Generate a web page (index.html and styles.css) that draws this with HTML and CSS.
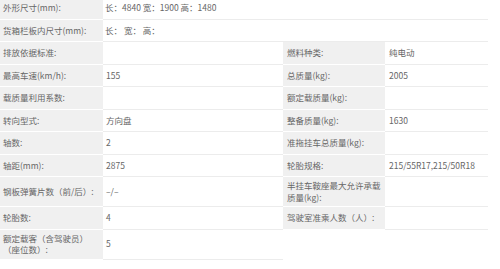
FILE: index.html
```html
<!DOCTYPE html>
<html lang="zh-CN">
<head>
<meta charset="utf-8">
<title>参数</title>
<link rel="stylesheet" href="styles.css">
</head>
<body>
<table class="spec">
  <colgroup>
    <col class="c-label">
    <col class="c-value">
    <col class="c-label2">
    <col class="c-value2">
  </colgroup>
  <tbody>
    <tr>
      <td class="lbl">外形尺寸(mm):</td>
      <td class="val wide" colspan="3">长：4840 宽：1900 高：1480</td>
    </tr>
    <tr>
      <td class="lbl">货箱栏板内尺寸(mm):</td>
      <td class="val wide" colspan="3">长： 宽： 高：</td>
    </tr>
    <tr>
      <td class="lbl">排放依据标准:</td>
      <td class="val"></td>
      <td class="lbl">燃料种类:</td>
      <td class="val">纯电动</td>
    </tr>
    <tr>
      <td class="lbl">最高车速(km/h):</td>
      <td class="val">155</td>
      <td class="lbl">总质量(kg):</td>
      <td class="val">2005</td>
    </tr>
    <tr>
      <td class="lbl">载质量利用系数:</td>
      <td class="val"></td>
      <td class="lbl">额定载质量(kg):</td>
      <td class="val"></td>
    </tr>
    <tr>
      <td class="lbl">转向型式:</td>
      <td class="val">方向盘</td>
      <td class="lbl">整备质量(kg):</td>
      <td class="val">1630</td>
    </tr>
    <tr>
      <td class="lbl">轴数:</td>
      <td class="val">2</td>
      <td class="lbl">准拖挂车总质量(kg):</td>
      <td class="val"></td>
    </tr>
    <tr>
      <td class="lbl">轴距(mm):</td>
      <td class="val">2875</td>
      <td class="lbl">轮胎规格:</td>
      <td class="val">215/55R17,215/50R18</td>
    </tr>
    <tr>
      <td class="lbl">钢板弹簧片数（前/后）:</td>
      <td class="val">–/–</td>
      <td class="lbl">半挂车鞍座最大允许承载质量(kg):</td>
      <td class="val"></td>
    </tr>
    <tr>
      <td class="lbl">轮胎数:</td>
      <td class="val">4</td>
      <td class="lbl">驾驶室准乘人数（人）:</td>
      <td class="val"></td>
    </tr>
    <tr class="last">
      <td class="lbl">额定载客（含驾驶员）<br>（座位数）:</td>
      <td class="val">5</td>
      <td class="none"></td>
      <td class="none"></td>
    </tr>
  </tbody>
</table>
</body>
</html>
```

FILE: styles.css
```css
html, body {
  margin: 0;
  padding: 0;
  background: #ffffff;
}

.spec {
  width: 488px;
  margin-top: -3.5px;
  table-layout: fixed;
  border-collapse: collapse;
  font-family: "Noto Sans CJK SC", "Noto Sans", sans-serif;
  font-size: 8.5px;
  line-height: 11.5px;
  color: #666666;
}

.c-label { width: 103px; }
.c-value { width: 180px; }
.c-label2 { width: 102px; }
.c-value2 { width: 103px; }

.spec tr {
  height: 22.5px;
}

.spec td {
  padding: 3px 2px 3px 3px;
  vertical-align: middle;
  word-break: break-all;
}

.lbl {
  background: #f0f0f0;
  border-bottom: 1px solid #ffffff;
}

.val {
  background: #ffffff;
  border-bottom: 1px solid #ececec;
}

.spec td.val {
  padding-left: 3px;
}

.spec td.lbl + td.val + td.lbl {
  padding-left: 4px;
}

.spec td.val:last-child {
  padding-left: 4px;
}

.spec td.val.wide {
  padding-left: 2px;
  white-space: pre;
  text-spacing-trim: space-all;
}

.none {
  background: #ffffff;
  border-bottom: none;
}
```
